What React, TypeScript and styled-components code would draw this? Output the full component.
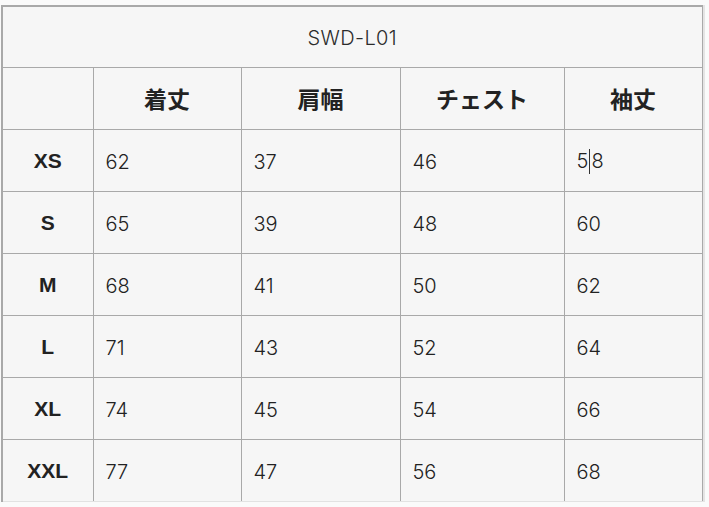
import styled, { createGlobalStyle } from 'styled-components'

const GlobalStyle = createGlobalStyle`
    html, body {
        margin: 0;
        padding: 0;
        background: #fafafa;
    }
    body {
        font-family: Inter, "Noto Sans CJK JP", sans-serif;
        color: #2b2b2b;
    }
`

const Wrap = styled.div`
    padding: 5px 0 0 1px;
`

const Table = styled.table`
    border-collapse: collapse;
    background: #f6f6f6;
    border-top: 2px solid #a9a9a9;
    border-left: 2px solid #a9a9a9;
    border-right: 1px solid #a9a9a9;
    box-shadow: 2px 0 0 #e4e4e4;
    table-layout: fixed;
`

const Row = styled.tr<{ $h?: number }>`
    height: ${p => p.$h ?? 62}px;
`

const Caption = styled.td`
    text-align: center;
    font-size: 20px;
    font-weight: 300;
    letter-spacing: 0.4px;
    border-bottom: 1px solid #a9a9a9;
    padding: 2px 0 0;
`

const Cell = styled.td<{ $head?: boolean; $last?: boolean }>`
    border: 1px solid #a9a9a9;
    border-bottom-color: ${p => (p.$last ? '#e2e2e2' : '#a9a9a9')};
    padding: 3px 0 0 12px;
    font-size: 20px;
    font-weight: ${p => (p.$head ? 700 : 300)};
    text-align: ${p => (p.$head ? 'center' : 'left')};
    color: #222;
    &:first-child {
        border-left: none;
    }
`

const HeadCell = styled(Cell)`
    padding: 0;
    font-size: 23px;
    font-family: "Noto Sans CJK JP", sans-serif;
`

const SizeCell = styled(Cell)`
    padding: 2px 0 0;
    font-size: 21px;
    font-family: "Liberation Sans", Arial, sans-serif;
`

const Caret = styled.span`
    display: inline-block;
    width: 1px;
    height: 25px;
    margin: 0 1px 0 1px;
    background: #333;
    vertical-align: -6px;
`

const widths = [91, 148, 159, 164, 138]
const heads = ['着丈', '肩幅', 'チェスト', '袖丈']
const rows: [string, string, string, string, string][] = [
    ['XS', '62', '37', '46', '58'],
    ['S', '65', '39', '48', '60'],
    ['M', '68', '41', '50', '62'],
    ['L', '71', '43', '52', '64'],
    ['XL', '74', '45', '54', '66'],
    ['XXL', '77', '47', '56', '68'],
]

const App = () => {
    return (
        <Wrap>
            <GlobalStyle />
            <Table>
                <colgroup>
                    {widths.map((w, i) => (
                        <col key={i} style={{ width: w }} />
                    ))}
                </colgroup>
                <tbody>
                    <Row $h={61}>
                        <Caption colSpan={5}>SWD-L01</Caption>
                    </Row>
                    <Row>
                        <HeadCell $head />
                        {heads.map(h => (
                            <HeadCell $head key={h}>{h}</HeadCell>
                        ))}
                    </Row>
                    {rows.map((r, ri) => {
                        const last = ri === rows.length - 1
                        return (
                            <Row key={r[0]}>
                                <SizeCell $head $last={last}>{r[0]}</SizeCell>
                                {r.slice(1).map((v, i) => (
                                    <Cell key={i} $last={last}>
                                        {ri === 0 && i === 3 ? (
                                            <>5<Caret />8</>
                                        ) : (
                                            v
                                        )}
                                    </Cell>
                                ))}
                            </Row>
                        )
                    })}
                </tbody>
            </Table>
        </Wrap>
    )
}

export default App
